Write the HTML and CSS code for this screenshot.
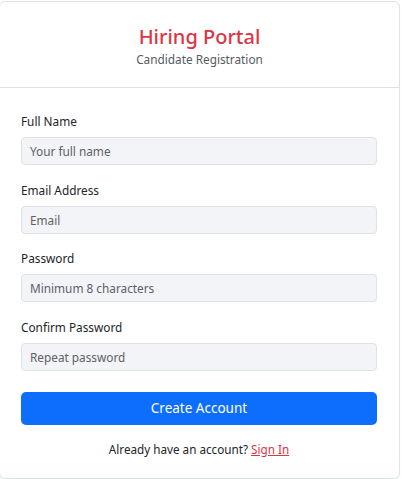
FILE: index.html
```html
<!DOCTYPE html>
<html lang="en">
<head>
<meta charset="utf-8">
<title>Hiring Portal</title>
<link rel="stylesheet" href="styles.css">
</head>
<body>
<div class="card">
  <div class="card-header">
    <h1 class="title">Hiring Portal</h1>
    <p class="subtitle">Candidate Registration</p>
  </div>
  <form class="card-body">
    <div class="field">
      <label class="label">Full Name</label>
      <input class="input" type="text" placeholder="Your full name">
    </div>
    <div class="field">
      <label class="label">Email Address</label>
      <input class="input" type="email" placeholder="Email">
    </div>
    <div class="field">
      <label class="label">Password</label>
      <input class="input" type="password" placeholder="Minimum 8 characters">
    </div>
    <div class="field">
      <label class="label">Confirm Password</label>
      <input class="input" type="password" placeholder="Repeat password">
    </div>
    <button class="btn" type="button">Create Account</button>
    <p class="footer">Already have an account? <a class="link" href="#">Sign In</a></p>
  </form>
</div>
</body>
</html>
```

FILE: styles.css
```css
* { box-sizing: border-box; }
html, body { margin: 0; padding: 0; background: #fff; }
body {
  font-family: "Noto Sans", "Open Sans", sans-serif;
  color: #212529;
}
.card {
  width: 401px;
  margin-top: 1px;
  margin-left: -1px;
  border: 1px solid #dee2e6;
  border-radius: 6px;
  background: #fff;
  box-shadow: 0 1px 2px rgba(0,0,0,0.05);
}
.card-header {
  padding: 21px 0 20px;
  border-bottom: 1px solid #dee2e6;
  text-align: center;
}
.title {
  margin: 0;
  font-size: 20px;
  line-height: 28px;
  font-weight: 500;
  color: #dc3545;
}
.subtitle {
  margin: 0;
  font-size: 11.8px;
  line-height: 16px;
  color: #555b63;
}
.card-body {
  display: flex;
  flex-direction: column;
  padding: 24px 22px 19px 21px;
}
.field {
  display: flex;
  flex-direction: column;
  margin-bottom: 15.67px;
}
.label {
  font-size: 11.8px;
  line-height: 18px;
  margin-bottom: 7px;
  color: #212529;
}
.input {
  height: 28px;
  width: 100%;
  border: 1px solid #dee2e6;
  border-radius: 4px;
  background: #f3f4f7;
  padding: 0 8px;
  font-family: inherit;
  font-size: 11.8px;
  color: #212529;
}
.input::placeholder { color: #5c6167; }
.btn {
  margin-top: 5.33px;
  height: 33px;
  border: 0;
  border-radius: 5px;
  background: #0d6efd;
  color: #fff;
  font-family: inherit;
  font-size: 13.5px;
}
.footer {
  margin: 14px 0 0;
  text-align: center;
  font-size: 11.7px;
  line-height: 20px;
  color: #212529;
}
.link { color: #dc3545; }
```
